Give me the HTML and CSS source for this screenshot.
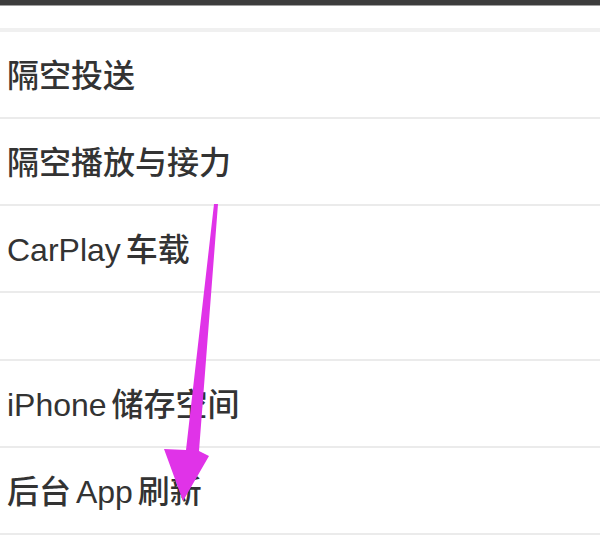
FILE: index.html
```html
<!DOCTYPE html>
<html lang="zh-CN">
<head>
<meta charset="UTF-8">
<meta name="viewport" content="width=device-width, initial-scale=1.0">
<title>通用</title>
<link rel="stylesheet" href="styles.css">
</head>
<body>
  <div class="topbar"></div>
  <div class="top-gap"></div>

  <ul class="settings">
    <li class="row">隔空投送</li>
    <li class="row">隔空播放与接力</li>
    <li class="row">CarPlay 车载</li>
    <li class="row spacer"></li>
    <li class="row">iPhone 储存空间</li>
    <li class="row">后台 App 刷新</li>
  </ul>

  <!-- pointer drawn over the list -->
  <svg class="pointer" width="600" height="535" viewBox="0 0 600 535">
    <polygon points="214,204 218,204 199,451 209,456 183,501 164,449 186,450" fill="#e033e8"/>
  </svg>
</body>
</html>
```

FILE: styles.css
```css
body {
    margin: 0;
    background: #ffffff;
    font-family: "Liberation Sans", "Noto Sans CJK SC", sans-serif;
    color: #333333;
    position: relative;
    overflow: hidden;
    height: 535px;
}

.topbar {
    height: 5px;
    background-color: #3d3d3d;
    border-bottom: 1px solid #a0a0a0;
}

.top-gap {
    height: 22px;
    border-bottom: 4px solid #f0f0f0;
}

.settings {
    list-style: none;
    margin: 0;
    padding: 0;
}

.row {
    box-sizing: border-box;
    height: 87px;
    display: flex;
    align-items: center;
    padding: 0 0 4px 7px;
    font-size: 32px;
    font-weight: 500;
    word-spacing: -4px;
    border-bottom: 2px solid #ebebeb;
}

.spacer {
    height: 68px;
}

.pointer {
    position: absolute;
    left: 0;
    top: 0;
    pointer-events: none;
}
```
